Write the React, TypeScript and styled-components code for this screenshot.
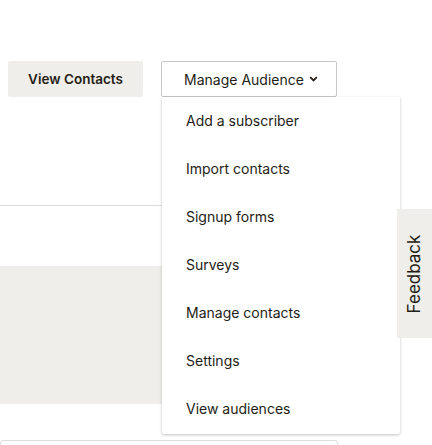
import React from "react";
import styled, { createGlobalStyle } from "styled-components";

const Global = createGlobalStyle`
  html, body { margin: 0; padding: 0; background: #fff; }
  body { font-family: Inter, "Noto Sans", Arial, sans-serif; color: #241c15; }
`;

const Page = styled.div`
  position: relative;
  width: 432px;
  height: 445px;
  overflow: hidden;
`;

const Toolbar = styled.div`
  display: flex;
  gap: 18px;
  padding: 61px 0 0 8px;
`;

const PrimaryButton = styled.button`
  width: 135px;
  height: 36px;
  border: none;
  border-radius: 2px;
  background: #efeeea;
  font: 600 13.5px Inter, Arial, sans-serif;
  color: #241c15;
`;

const DropButton = styled.button`
  width: 176px;
  height: 36px;
  border: 1px solid #c8c7c4;
  border-radius: 2px;
  background: #fff;
  font: 400 14px Inter, Arial, sans-serif;
  color: #241c15;
  display: flex;
  align-items: center;
  justify-content: center;
  gap: 5px;
  padding: 0 0 0 4px;
`;

const Divider = styled.div`
  margin-top: 108px;
  height: 1px;
  width: 200px;
  background: #ddd;
`;

const GreyBlock = styled.div`
  margin-top: 60px;
  width: 200px;
  height: 138px;
  background: #efeeea;
`;

const BottomField = styled.div`
  margin-top: 36px;
  width: 336px;
  height: 20px;
  border: 1px solid #ddd;
  border-radius: 3px;
`;

const Menu = styled.ul`
  position: absolute;
  left: 162px;
  top: 97px;
  width: 238px;
  height: 337px;
  overflow: hidden;
  margin: 0;
  padding: 0;
  list-style: none;
  background: #fff;
  box-shadow: 0 1px 3px rgba(0,0,0,0.25);
  border-radius: 0 0 2px 2px;
`;

const MenuItem = styled.li`
  height: 48px;
  line-height: 48px;
  padding-left: 24px;
  font-size: 14px;
  color: #241c15;
`;

const FeedbackTab = styled.div`
  position: absolute;
  left: 397px;
  top: 209px;
  width: 35px;
  height: 129px;
  background: #efeeea;
  display: flex;
  align-items: center;
  justify-content: center;
`;

const FeedbackText = styled.span`
  transform: rotate(-90deg);
  font-size: 17px;
  color: #241c15;
  white-space: nowrap;
`;

const items = [
  "Add a subscriber",
  "Import contacts",
  "Signup forms",
  "Surveys",
  "Manage contacts",
  "Settings",
  "View audiences",
];

export default function App() {
  return (
    <Page>
      <Global />
      <Toolbar>
        <PrimaryButton>View Contacts</PrimaryButton>
        <DropButton>
          Manage Audience
          <svg width="9" height="6" viewBox="0 0 9 6">
            <path d="M1.2 1.2 L4.5 4.4 L7.8 1.2" fill="none" stroke="#241c15" strokeWidth="1.8" />
          </svg>
        </DropButton>
      </Toolbar>
      <Divider />
      <GreyBlock />
      <BottomField />
      <Menu>
        {items.map((t) => (
          <MenuItem key={t}>{t}</MenuItem>
        ))}
      </Menu>
      <FeedbackTab>
        <FeedbackText>Feedback</FeedbackText>
      </FeedbackTab>
    </Page>
  );
}
